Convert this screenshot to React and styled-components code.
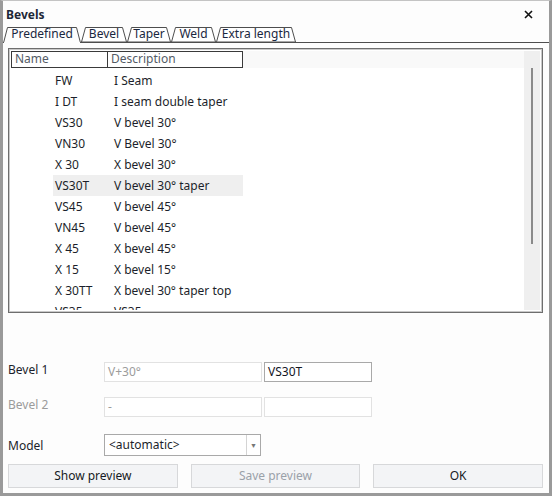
import React from "react";
import styled, { createGlobalStyle } from "styled-components";

const GlobalStyle = createGlobalStyle`
  html, body {
    margin: 0;
    padding: 0;
    background: #ffffff;
  }
  * {
    box-sizing: border-box;
  }
`;

const Window = styled.div`
  width: 552px;
  height: 496px;
  background: #fdfdfd;
  border: 3px solid #9a9a9a;
  border-top: 1px solid #c4c4c4;
  display: flex;
  flex-direction: column;
  font-family: "Noto Sans", "Open Sans", sans-serif;
  font-size: 12px;
  color: #1c1f2b;
  overflow: hidden;
`;

const TitleBar = styled.div`
  height: 24px;
  display: flex;
  align-items: center;
  justify-content: space-between;
  padding: 2px 16px 0 3px;
`;

const Title = styled.div`
  font-weight: bold;
  font-size: 12px;
  color: #1d2838;
`;

const TabStrip = styled.div`
  margin-top: 2px;
  height: 16px;
  display: flex;
  align-items: flex-end;
  border-bottom: 1px solid #4e4e4e;
`;

const Tab = styled.div`
  position: relative;
  width: ${(p) => p.$w}px;
  display: flex;
  align-items: center;
  justify-content: center;
  color: #1a2740;
  line-height: 14px;
  margin-bottom: ${(p) => (p.$active ? "-1px" : "0")};
  height: ${(p) => (p.$active ? "16px" : "15px")};
  z-index: ${(p) => (p.$active ? 1 : 0)};

  svg {
    position: absolute;
    inset: 0;
  }
  span {
    position: relative;
    padding-bottom: ${(p) => (p.$active ? "2px" : "1px")};
  }
`;

const Frame = styled.div`
  margin: 5px 6px 0 5px;
  height: 265px;
  border: 1px solid #6e6e6e;
  box-shadow: inset 0 0 0 1px #c9c9c9;
  padding: 2px;
  display: flex;
  background: #ffffff;
`;

const ListBody = styled.div`
  flex: 1;
  overflow: hidden;
`;

const HeaderBand = styled.div`
  height: 17px;
  background: #f9f9f9;
  display: flex;
`;

const HeaderBox = styled.div`
  width: 232px;
  height: 17px;
  border: 1px solid #3a3a3a;
  display: flex;
  background: #ffffff;
`;

const HeaderCell = styled.div`
  width: ${(p) => (p.$w ? `${p.$w}px` : "auto")};
  flex: ${(p) => (p.$w ? "none" : "1")};
  padding-left: 3px;
  line-height: 14px;
  color: #545b66;
  border-right: ${(p) => (p.$divider ? "1px solid #3a3a3a" : "none")};
`;

const Rows = styled.div`
  padding-top: 2px;
`;

const Row = styled.div`
  margin-left: 42px;
  width: 190px;
  height: 21px;
  display: flex;
  align-items: center;
  background: ${(p) => (p.$selected ? "#efefef" : "transparent")};
`;

const NameCell = styled.div`
  width: 59px;
  padding-left: 2px;
  white-space: nowrap;
`;

const DescCell = styled.div`
  flex: 1;
  padding-left: 2px;
  white-space: nowrap;
`;

const ScrollTrack = styled.div`
  width: 16px;
  background: #efefef;
  display: flex;
  justify-content: center;
  padding-top: 17px;
`;

const ScrollThumb = styled.div`
  width: 2px;
  height: 176px;
  background: #8a8a8a;
`;

const Form = styled.div`
  padding: 0 6px 0 5px;
  display: flex;
  flex-direction: column;
`;

const FieldRow = styled.div`
  display: flex;
  align-items: center;
  margin-top: ${(p) => p.$top}px;
  height: ${(p) => p.$h}px;
`;

const Label = styled.div`
  width: 96px;
  color: ${(p) => (p.$disabled ? "#9b9b9b" : "#1c1f2b")};
  margin-top: ${(p) => p.$shift || 0}px;
`;

const Input = styled.div`
  width: ${(p) => p.$w}px;
  height: 20px;
  margin-right: 2px;
  border: 1px solid ${(p) => (p.$disabled ? "#e2e2e2" : "#a9a9a9")};
  background: #ffffff;
  color: ${(p) => (p.$disabled ? "#9c9c9c" : "#14161f")};
  padding-left: 3px;
  line-height: 17px;
`;

const Select = styled.div`
  width: 157px;
  height: 22px;
  border: 1px solid #a9a9a9;
  background: #ffffff;
  display: flex;
  align-items: stretch;
`;

const SelectText = styled.div`
  flex: 1;
  padding-left: 4px;
  line-height: 19px;
`;

const SelectArrow = styled.div`
  width: 14px;
  border-left: 1px solid #d4d4d4;
  display: flex;
  align-items: center;
  justify-content: center;
  color: #777;
  font-size: 7px;
`;

const ButtonRow = styled.div`
  margin-top: 8px;
  display: grid;
  grid-template-columns: repeat(3, 1fr);
  gap: 13px;
`;

const Button = styled.div`
  height: 24px;
  border: 1px solid #d7d8da;
  background: #f3f4f6;
  display: flex;
  align-items: center;
  justify-content: center;
  padding-bottom: 2px;
  color: ${(p) => (p.$disabled ? "#9aa1a9" : "#161a24")};
`;

const tabs = [
  { label: "Predefined", w: 78, active: true },
  { label: "Bevel", w: 46 },
  { label: "Taper", w: 44 },
  { label: "Weld", w: 45 },
  { label: "Extra length", w: 80 },
];

const bevels = [
  ["FW", "I Seam"],
  ["I DT", "I seam double taper"],
  ["VS30", "V bevel 30°"],
  ["VN30", "V Bevel 30°"],
  ["X 30", "X bevel 30°"],
  ["VS30T", "V bevel 30° taper"],
  ["VS45", "V bevel 45°"],
  ["VN45", "V bevel 45°"],
  ["X 45", "X bevel 45°"],
  ["X 15", "X bevel 15°"],
  ["X 30TT", "X bevel 30° taper top"],
  ["VS35", "VS35"],
];

function TabShape({ w, h, active }) {
  return (
    <svg width={w} height={h} viewBox={`0 0 ${w} ${h}`}>
      <polygon
        points={`0.5,${h} 4.5,0.5 ${w - 4.5},0.5 ${w - 0.5},${h}`}
        fill={active ? "#fdfdfd" : "#ffffff"}
        stroke="#4e4e4e"
        strokeWidth="1"
      />
      {active && <rect x="1" y={h - 1} width={w - 2} height="1" fill="#fdfdfd" />}
    </svg>
  );
}

function CloseIcon() {
  return (
    <svg width="9" height="9" viewBox="0 0 9 9">
      <path d="M1 1 L8 8 M8 1 L1 8" stroke="#111" strokeWidth="1.6" />
    </svg>
  );
}

export default function App() {
  return (
    <>
      <GlobalStyle />
      <Window>
        <TitleBar>
          <Title>Bevels</Title>
          <CloseIcon />
        </TitleBar>

        <TabStrip>
          {tabs.map((t) => (
            <Tab key={t.label} $w={t.w} $active={t.active}>
              <TabShape w={t.w} h={t.active ? 16 : 15} active={t.active} />
              <span>{t.label}</span>
            </Tab>
          ))}
        </TabStrip>

        <Frame>
          <ListBody>
            <HeaderBand>
              <HeaderBox>
                <HeaderCell $w={96} $divider>
                  Name
                </HeaderCell>
                <HeaderCell>Description</HeaderCell>
              </HeaderBox>
            </HeaderBand>
            <Rows>
              {bevels.map(([name, desc]) => (
                <Row key={name} $selected={name === "VS30T"}>
                  <NameCell>{name}</NameCell>
                  <DescCell>{desc}</DescCell>
                </Row>
              ))}
            </Rows>
          </ListBody>
          <ScrollTrack>
            <ScrollThumb />
          </ScrollTrack>
        </Frame>

        <Form>
          <FieldRow $top={49} $h={20}>
            <Label $shift={-5}>Bevel 1</Label>
            <Input $w={158} $disabled>
              V+30°
            </Input>
            <Input $w={108}>VS30T</Input>
          </FieldRow>
          <FieldRow $top={15} $h={20}>
            <Label $disabled $shift={-6}>
              Bevel 2
            </Label>
            <Input $w={158} $disabled>
              -
            </Input>
            <Input $w={108} $disabled />
          </FieldRow>
          <FieldRow $top={17} $h={22}>
            <Label $shift={1}>Model</Label>
            <Select>
              <SelectText>&lt;automatic&gt;</SelectText>
              <SelectArrow>▼</SelectArrow>
            </Select>
          </FieldRow>
          <ButtonRow>
            <Button>Show preview</Button>
            <Button $disabled>Save preview</Button>
            <Button>OK</Button>
          </ButtonRow>
        </Form>
      </Window>
    </>
  );
}
